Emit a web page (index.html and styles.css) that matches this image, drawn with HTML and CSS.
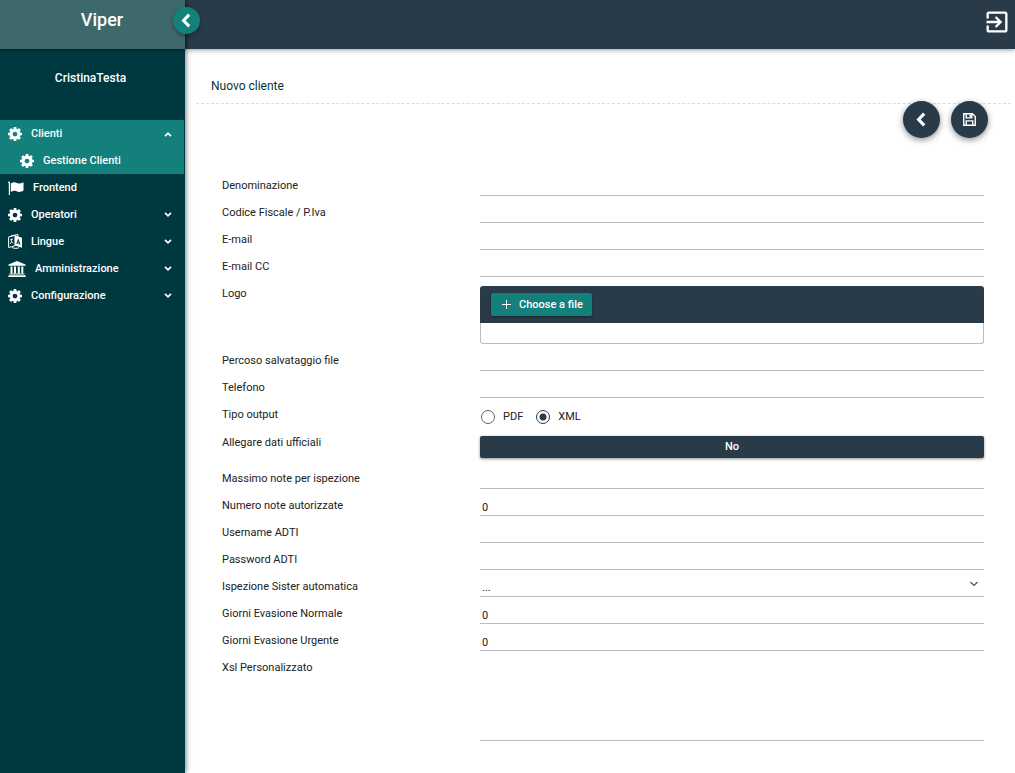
FILE: index.html
```html
<!DOCTYPE html>
<html lang="it">
<head>
<meta charset="utf-8">
<title>Viper</title>
<link rel="stylesheet" href="styles.css">
</head>
<body>
<svg class="defs" aria-hidden="true">
  <symbol id="cog" viewBox="128 128 1536 1536"><path d="M1152 896q0-106-75-181t-181-75-181 75-75 181 75 181 181 75 181-75 75-181zm512-109v222q0 12-8 23t-20 13l-185 28q-19 54-39 91 35 50 107 138 10 12 10 25t-9 23q-27 37-99 108t-94 71q-12 0-26-9l-138-108q-44 23-91 38-16 136-29 186-7 28-36 28h-222q-14 0-24.500-8.500t-11.500-21.500l-28-184q-49-16-90-37l-141 107q-10 9-25 9-14 0-25-11-126-114-165-168-7-10-7-23 0-12 8-23 15-21 51-66.500t54-70.500q-27-50-41-99l-183-27q-13-2-21-12.500t-8-23.500v-222q0-12 8-23t19-13l186-28q14-46 39-92-40-57-107-138-10-12-10-24 0-10 9-23 26-36 98.500-107.500t94.500-71.500q13 0 26 10l138 107q44-23 91-38 16-136 29-186 7-28 36-28h222q14 0 24.500 8.500t11.500 21.500l28 184q49 16 90 37l142-107q9-9 24-9 13 0 25 10 129 119 165 170 7 8 7 22 0 12-8 23-15 21-51 66.500t-54 70.500q26 50 41 98l183 28q13 2 21 12.500t8 23.500z"/></symbol>
  <symbol id="down" viewBox="0 0 8 8"><path d="M1 1.800 4 4.800 7 1.800" fill="none" stroke="currentColor" stroke-width="1.700"/></symbol>
  <symbol id="left" viewBox="0 0 10 14"><path d="M7.500 1.500 2.300 7l5.200 5.500" fill="none" stroke="currentColor" stroke-width="2.900"/></symbol>
</svg>
<div class="app">
  <aside class="sidebar">
    <div class="brand">Viper
      <button class="toggle" type="button" aria-label="Chiudi menu"><svg width="11" height="15"><use href="#left"/></svg></button>
    </div>
    <div class="user">CristinaTesta</div>
    <nav class="menu">
      <a class="item active" href="#"><svg width="14" height="14"><use href="#cog"/></svg><span>Clienti</span><svg class="arrow up" width="8" height="8"><use href="#down"/></svg></a>
      <a class="item sub active" href="#"><svg width="14" height="14"><use href="#cog"/></svg><span>Gestione Clienti</span></a>
      <a class="item" href="#"><svg width="16" height="14" viewBox="0 0 16 14"><path d="M0 1.500a1 1 0 0 1 2 0V14H.8V2.300zM2.800 2.500C5 1.200 6.500.9 8.200 1.800c2.400 1.200 4.500.9 7.300-.5v8.200c-2.700 1.700-4.600 1.900-7 .7-1.900-.9-3.500-.5-5.700.8z"/></svg><span>Frontend</span></a>
      <a class="item" href="#"><svg width="14" height="14"><use href="#cog"/></svg><span>Operatori</span><svg class="arrow" width="8" height="8"><use href="#down"/></svg></a>
      <a class="item" href="#"><svg width="14" height="15" viewBox="0 0 14 15"><path d="M.6 3 7 1.300v10.500L.6 13.500zM3 1.800 10 .6v2.100M4 13.500c2 1.100 5 1.200 7 .2" fill="none" stroke="currentColor"/><path d="m7 1.500 7 2.300v10L7 11.600z"/><path d="M2.200 5.800 5 5M3.600 5c.2 2-.3 3.600-1.600 5M2.800 7l2.500 2" fill="none" stroke="currentColor" stroke-width=".9"/><path class="cut" d="m8.800 10 1.500-4.500L12 10.800M9.300 8.500l2 .6"/></svg><span>Lingue</span><svg class="arrow" width="8" height="8"><use href="#down"/></svg></a>
      <a class="item" href="#"><svg width="18" height="16" viewBox="0 0 18 16"><path d="m9 0 8.500 3.500v1.200H.5V3.500zM2.500 5.500h2v6.800h-2zM6 5.500h2v6.800H6zM9.800 5.500h2v6.800h-2zM13.300 5.500h2v6.800h-2zM1.500 12.500h15v1h-15zM.4 14.300h17.200V16H.4z"/></svg><span>Amministrazione</span><svg class="arrow" width="8" height="8"><use href="#down"/></svg></a>
      <a class="item" href="#"><svg width="14" height="14"><use href="#cog"/></svg><span>Configurazione</span><svg class="arrow" width="8" height="8"><use href="#down"/></svg></a>
    </nav>
  </aside>
  <div class="page">
    <header class="topbar">
      <button class="exit" type="button" aria-label="Esci"><svg width="28" height="28" viewBox="0 0 24 24"><path d="M10.090 15.590 11.500 17l5-5-5-5-1.410 1.410L12.670 11H3v2h9.670zM19 3H5c-1.110 0-2 .9-2 2v4h2V5h14v14H5v-4H3v4c0 1.100.89 2 2 2h14c1.100 0 2-.9 2-2V5c0-1.100-.9-2-2-2z"/></svg></button>
    </header>
    <main class="content">
      <h1 class="title">Nuovo cliente</h1>
      <div class="actions">
        <button class="round" type="button" aria-label="Indietro"><svg width="11" height="15"><use href="#left"/></svg></button>
        <button class="round" type="submit" form="cliente" aria-label="Salva"><svg width="13" height="13" viewBox="0 0 14 14"><path d="M.8.800h9.400l3 3v9.400H.8zM3.500.8v4.400h6V.8M3.500 13.200V8.500h7v4.700" fill="none" stroke="currentColor" stroke-width="1.500"/><path d="M7 1.500h1.700v2.700H7z"/></svg></button>
      </div>
      <form id="cliente" class="form">
        <div class="row"><label for="den">Denominazione</label><input class="line" id="den" type="text"></div>
        <div class="row"><label for="cf">Codice Fiscale / P.Iva</label><input class="line" id="cf" type="text"></div>
        <div class="row"><label for="em">E-mail</label><input class="line" id="em" type="email"></div>
        <div class="row"><label for="cc">E-mail CC</label><input class="line" id="cc" type="email"></div>
        <div class="row"><label for="logo">Logo</label>
          <div class="upload">
            <div class="upload-bar"><button class="choose" id="logo" type="button"><svg width="9" height="9" viewBox="0 0 9 9"><path d="M4 0h1v4h4v1H5v4H4V5H0V4h4z"/></svg>Choose a file</button></div>
            <div class="upload-list"></div>
          </div>
        </div>
        <div class="row"><label for="per">Percoso salvataggio file</label><input class="line" id="per" type="text"></div>
        <div class="row"><label for="tel">Telefono</label><input class="line" id="tel" type="tel"></div>
        <div class="row"><span class="label" id="tipo">Tipo output</span>
          <div class="radios" role="radiogroup" aria-labelledby="tipo">
            <label class="radio"><input type="radio" name="tipo">PDF</label>
            <label class="radio"><input type="radio" name="tipo" checked>XML</label>
          </div>
        </div>
        <div class="row"><label for="all">Allegare dati ufficiali</label><button class="switch" id="all" type="button">No</button></div>
        <div class="row"><label for="max">Massimo note per ispezione</label><input class="line" id="max" type="text"></div>
        <div class="row"><label for="num">Numero note autorizzate</label><input class="line" id="num" type="text" value="0"></div>
        <div class="row"><label for="usr">Username ADTI</label><input class="line" id="usr" type="text"></div>
        <div class="row"><label for="pwd">Password ADTI</label><input class="line" id="pwd" type="password"></div>
        <div class="row"><label for="isp">Ispezione Sister automatica</label>
          <div class="select"><select class="line" id="isp"><option>...</option></select><svg class="caret" width="8" height="6" viewBox="0 0 8 6"><path d="m.5 1 3.500 3.500L7.500 1" fill="none" stroke="currentColor" stroke-width="1.200"/></svg></div>
        </div>
        <div class="row"><label for="gn">Giorni Evasione Normale</label><input class="line" id="gn" type="text" value="0"></div>
        <div class="row"><label for="gu">Giorni Evasione Urgente</label><input class="line" id="gu" type="text" value="0"></div>
        <div class="row"><label for="xsl">Xsl Personalizzato</label><textarea class="line area" id="xsl"></textarea></div>
      </form>
    </main>
  </div>
</div>
</body>
</html>
```
FILE: styles.css
```css
* { box-sizing: border-box; }
body { margin: 0; background: #fff; color: #212121; font: 11px/14px Roboto, sans-serif; }
button, input, select, textarea { font: inherit; color: inherit; margin: 0; border: 0; }
button { display: flex; align-items: center; justify-content: center; padding: 0; color: #fff; cursor: pointer; }
svg { fill: currentColor; flex: none; }
.defs { position: absolute; width: 0; height: 0; }

.app { display: flex; min-height: 100vh; }
.sidebar { flex: none; width: 185px; background: #00383f; color: #fff; box-shadow: 1px 0 5px rgba(0, 0, 0, .5); z-index: 2; }
.brand { position: relative; height: 49px; padding: 8px 0 0 19px; text-align: center; font-size: 18px; line-height: 24px; font-weight: 500; background: #3e696b; box-shadow: 0 1px 3px rgba(0, 0, 0, .5); }
.toggle { position: absolute; top: 7px; right: -15px; width: 27px; height: 27px; border-radius: 50%; background: #13807c; box-shadow: 0 2px 4px rgba(0, 0, 0, .35); }
.user { padding: 21px 6px 34px 2px; text-align: center; font-size: 12px; line-height: 16px; font-weight: 500; }
.menu { margin-right: 1px; }
.item { display: flex; align-items: center; gap: 9px; height: 27px; padding: 0 12px 0 8px; color: #fff; font-weight: 500; text-decoration: none; }
.item.active { background: #13807c; }
.item.sub { padding-left: 20px; }
.arrow { margin-left: auto; }
.arrow.up { transform: rotate(180deg); }
.cut { fill: none; stroke: #00383f; }

.page { flex: 1; min-width: 0; }
.topbar { display: flex; justify-content: flex-end; height: 49px; padding: 8px 4px; background: #293b49; box-shadow: 0 1px 5px rgba(0, 0, 0, .4); }
.exit { width: 28px; height: 28px; background: none; }

.content { padding: 25px 4px 32px 11px; }
.title { margin: 0; padding: 4px 15px 9px; border-bottom: 1px dashed #ddd; font-size: 12px; line-height: 16px; font-weight: 400; color: #06343b; }
.actions { display: flex; justify-content: flex-end; gap: 11px; margin-top: -3px; padding-right: 23px; }
.round { width: 37px; height: 37px; border-radius: 50%; background: #293b49; box-shadow: 0 2px 6px rgba(0, 0, 0, .45); }

.form { margin: 31px 27px 0 26px; }
.row { display: grid; grid-template-columns: 258px 1fr; align-items: start; }
.row > label, .label { padding-top: 10px; }
.line { display: block; width: 100%; height: 27px; padding: 10px 2px 0; border-bottom: 1px solid #bdbdbd; border-radius: 0; background: none; outline: 0; }
.area { height: 90px; resize: none; }
.select { position: relative; }
.select .line { appearance: none; }
.caret { position: absolute; right: 6px; top: 11px; color: #41506b; }

.upload { padding-top: 9px; }
.upload-bar { height: 37px; padding: 7px 11px; border-radius: 3px 3px 0 0; background: #293b49; }
.choose { gap: 8px; height: 23px; padding: 0 9px 0 11px; border-radius: 2px; background: #13807c; font-weight: 500; box-shadow: 0 1px 3px rgba(0, 0, 0, .4); }
.upload-list { height: 21px; border: 1px solid #bdbdbd; border-top: 0; border-radius: 0 0 3px 3px; }

.radios { display: flex; gap: 13px; height: 28px; padding: 9px 1px 0; }
.radio { display: flex; align-items: center; gap: 8px; height: 19px; }
.radio input { appearance: none; width: 14px; height: 14px; border: 1px solid #666; border-radius: 50%; }
.radio input:checked { border-color: #293b49; background: radial-gradient(circle, #293b49 3px, transparent 4px); }
.switch { height: 22px; margin: 10px 0 4px; border-radius: 2px; background: #293b49; font-weight: 500; box-shadow: 0 1px 3px rgba(0, 0, 0, .45); }
```
